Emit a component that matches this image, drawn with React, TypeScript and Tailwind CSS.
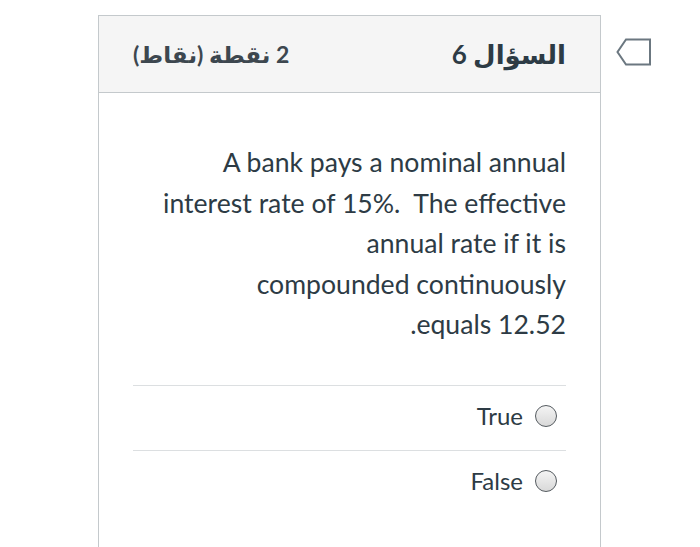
import { Fragment } from 'react';

const FONT = "font-['Lato','DejaVu_Sans',sans-serif]";

const QUESTION_LINES = [
  'A bank pays a nominal annual',
  'interest rate of 15%.\u00a0 The effective',
  'annual rate if it is',
  'compounded continuously',
  'equals 12.52.',
];

const ANSWERS = ['True', 'False'];

function FlagIcon() {
  return (
    <svg width="36" height="28" viewBox="0 0 36 28" className="block">
      <path d="M10 1.5 H34 V26.5 H10 L1.5 14 Z" fill="none" stroke="#6b7780" strokeWidth="2" strokeLinejoin="miter" />
    </svg>
  );
}

function Radio() {
  return (
    <span className="block h-[22px] w-[22px] shrink-0 rounded-full border-[1.5px] border-[#555b60] bg-gradient-to-b from-[#f4f4f4] to-[#d9d9d9]" />
  );
}

export default function App() {
  return (
    <div className={`flex h-[547px] w-[700px] overflow-hidden bg-white ${FONT}`}>
      {/* بطاقة السؤال */}
      <div dir="rtl" className="ml-[98px] mt-[15px] h-[620px] w-[503px] shrink-0 border border-[#c4c9cc] bg-white text-[#2d3b45]">
        <div className="flex h-[77px] items-center justify-between border-b border-[#c4c9cc] bg-[#f5f5f5] px-[34px]">
          <span className="text-[26px] font-bold text-[#2d3b45]">السؤال 6</span>
          <span className="text-[23px] font-bold text-[#3d474f]">2 نقطة (نقاط)</span>
        </div>
        <div className="px-[34px] pt-[49px]">
          <div className="text-[26.6px] leading-[40.5px] whitespace-nowrap">
            {QUESTION_LINES.map((line, i) => (
              <Fragment key={i}>
                {line}
                {i < QUESTION_LINES.length - 1 && <br />}
              </Fragment>
            ))}
          </div>
          <div className="mt-[40px]">
            {ANSWERS.map((a) => (
              <div key={a} className="border-t border-[#dcdfe1]">
                <label className="flex h-[64px] items-center gap-[12px] pb-[3px] pr-[9px]">
                  <Radio />
                  <span className="text-[24px] text-[#2d3b45]">{a}</span>
                </label>
              </div>
            ))}
          </div>
        </div>
      </div>
      <div className="ml-[15px] mt-[38px]">
        <FlagIcon />
      </div>
    </div>
  );
}
